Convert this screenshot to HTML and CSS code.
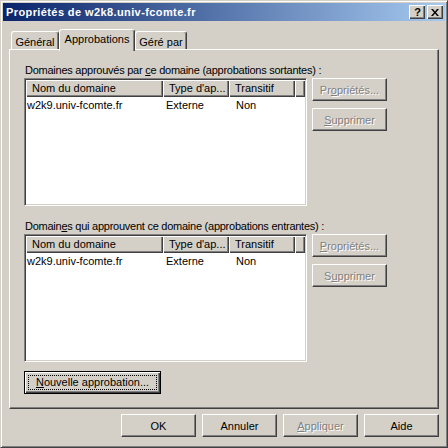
FILE: index.html
```html
<!DOCTYPE html>
<html lang="fr">
<head>
    <meta charset="UTF-8">
    <title>Propriétés de w2k8.univ-fcomte.fr</title>
    <link rel="stylesheet" href="styles.css">
</head>
<body>
    <div class="window">
        <div class="titlebar">
            <span class="title">Propriétés de w2k8.univ-fcomte.fr</span>
            <div class="caption-buttons">
                <button class="cap-btn help">?</button>
                <button class="cap-btn">
                    <svg width="8" height="7" viewBox="0 0 8 7"><path d="M0 0h2l2 2.4L6 0h2L5 3.5 8 7H6L4 4.6 2 7H0l3-3.5z" fill="#000"/></svg>
                </button>
            </div>
        </div>

        <div class="dialog-body">
            <div class="tabs">
                <div class="tab tab-general">Général</div>
                <div class="tab tab-approb active">Approbations</div>
                <div class="tab tab-gere">Géré par</div>
            </div>

            <div class="panel">
                <div class="group">
                    <div class="group-label">Domaines approuvés par <u>c</u>e domaine (approbations sortantes) :</div>
                    <div class="group-row">
                        <div class="listview">
                            <div class="lv-header">
                                <div class="lv-col c1">Nom du domaine</div>
                                <div class="lv-col c2">Type d'ap...</div>
                                <div class="lv-col c3">Transitif</div>
                                <div class="lv-col c4"></div>
                            </div>
                            <div class="lv-row">
                                <div class="lv-cell c1">w2k9.univ-fcomte.fr</div>
                                <div class="lv-cell c2">Externe</div>
                                <div class="lv-cell c3">Non</div>
                            </div>
                        </div>
                        <div class="side-buttons">
                            <button class="btn disabled">Pr<u>o</u>priétés...</button>
                            <button class="btn disabled"><u>S</u>upprimer</button>
                        </div>
                    </div>
                </div>

                <div class="group second">
                    <div class="group-label">Domain<u>e</u>s qui approuvent ce domaine (approbations entrantes) :</div>
                    <div class="group-row">
                        <div class="listview">
                            <div class="lv-header">
                                <div class="lv-col c1">Nom du domaine</div>
                                <div class="lv-col c2">Type d'ap...</div>
                                <div class="lv-col c3">Transitif</div>
                                <div class="lv-col c4"></div>
                            </div>
                            <div class="lv-row">
                                <div class="lv-cell c1">w2k9.univ-fcomte.fr</div>
                                <div class="lv-cell c2">Externe</div>
                                <div class="lv-cell c3">Non</div>
                            </div>
                        </div>
                        <div class="side-buttons">
                            <button class="btn disabled"><u>P</u>ropriétés...</button>
                            <button class="btn disabled">S<u>u</u>pprimer</button>
                        </div>
                    </div>
                </div>

                <button class="btn default"><span class="focus"><u>N</u>ouvelle approbation...</span></button>
            </div>

            <div class="footer">
                <button class="btn">OK</button>
                <button class="btn">Annuler</button>
                <button class="btn disabled"><u>A</u>ppliquer</button>
                <button class="btn">Aide</button>
            </div>
        </div>
    </div>
</body>
</html>
```

FILE: styles.css
```css
* {
    margin: 0;
    padding: 0;
    box-sizing: border-box;
}

body {
    font-family: 'Liberation Sans', Arial, sans-serif;
    font-size: 11px;
    color: #000;
    background: #d4d0c8;
}

.window {
    width: 448px;
    height: 448px;
    background: #d4d0c8;
    border: 1px solid;
    border-color: #d4d0c8 #404040 #404040 #d4d0c8;
    box-shadow: inset 1px 1px #fff, inset -1px -1px #808080;
    padding: 2px;
}

/* title bar */
.titlebar {
    height: 18px;
    display: flex;
    align-items: center;
    justify-content: space-between;
    padding-left: 3px;
    background: linear-gradient(90deg, #0a246a 0%, #a6caf0 100%);
}

.title {
    color: #fff;
    font-weight: bold;
    font-size: 11px;
    letter-spacing: 0.4px;
}

.caption-buttons {
    display: flex;
    gap: 2px;
    margin-right: 2px;
}

.cap-btn {
    width: 16px;
    height: 14px;
    background: #d4d0c8;
    border: none;
    box-shadow: inset 1px 1px #fff, inset -1px -1px #404040, inset -2px -2px #808080;
    display: flex;
    align-items: center;
    justify-content: center;
    font-family: inherit;
}

.cap-btn.help {
    font-weight: bold;
    font-size: 11px;
    line-height: 12px;
    padding-left: 1px;
}

/* body */
.dialog-body {
    padding: 8px 6px 0;
}

.tabs {
    display: flex;
    align-items: flex-end;
    height: 20px;
    padding-left: 2px;
}

.tab {
    height: 18px;
    line-height: 18px;
    text-align: center;
    border: 1px solid;
    border-color: #fff #404040 transparent #fff;
    border-bottom: 0;
    border-radius: 3px 3px 0 0;
    box-shadow: inset -1px 0 #808080;
    padding-top: 1px;
}

.tab-general { width: 48px; }
.tab-approb { width: 76px; }
.tab-gere { width: 52px; }

.tab.active {
    position: relative;
    z-index: 1;
    height: 22px;
    line-height: 18px;
    padding-top: 0;
    margin-bottom: -2px;
    background: #d4d0c8;
}

.panel {
    height: 360px;
    border: 1px solid;
    border-color: #fff #404040 #404040 #fff;
    box-shadow: inset -1px -1px #808080;
    padding: 14px 14px 0;
}

.group-label {
    line-height: 13px;
    margin-bottom: 1px;
    padding-left: 1px;
    letter-spacing: -0.25px;
}

.group.second {
    margin-top: 14px;
}

.group-row {
    display: flex;
    gap: 5px;
}

/* list view */
.listview {
    width: 283px;
    height: 128px;
    background: #fff;
    border: 1px solid;
    border-color: #808080 #fff #fff #808080;
    box-shadow: inset 1px 1px #404040, inset -1px -1px #d4d0c8;
    padding: 1px;
}

.lv-header {
    display: flex;
    height: 17px;
}

.lv-col {
    background: #d4d0c8;
    box-shadow: inset 1px 1px #fff, inset -1px -1px #404040, inset -2px -2px #808080;
    line-height: 16px;
    padding-left: 6px;
    white-space: nowrap;
    overflow: hidden;
}

.c1 { width: 137px; }
.c2 { width: 66px; }
.c3 { width: 66px; }
.c4 { flex: 1; }

.lv-row {
    display: flex;
    height: 15px;
    line-height: 16px;
}

.lv-cell.c1 { padding-left: 1px; }
.lv-cell.c2 { padding-left: 3px; }
.lv-cell.c3 { padding-left: 7px; }

.side-buttons {
    display: flex;
    flex-direction: column;
    gap: 7px;
}

/* buttons */
.btn {
    width: 75px;
    height: 23px;
    font-family: inherit;
    font-size: 11px;
    color: #000;
    background: #d4d0c8;
    border: 1px solid;
    border-color: #fff #404040 #404040 #fff;
    box-shadow: inset -1px -1px #808080;
}

.btn.disabled {
    color: #808080;
    text-shadow: 1px 1px 0 #fff;
}

.btn.default {
    width: 137px;
    margin-top: 9px;
    border: 1px solid #000;
    box-shadow: inset 1px 1px #fff, inset -1px -1px #404040, inset -2px -2px #808080;
    padding: 3px;
}

.focus {
    display: block;
    border: 1px dotted #000;
    line-height: 13px;
}

.footer {
    display: flex;
    justify-content: flex-end;
    gap: 6px;
    margin-top: 5px;
}
```
